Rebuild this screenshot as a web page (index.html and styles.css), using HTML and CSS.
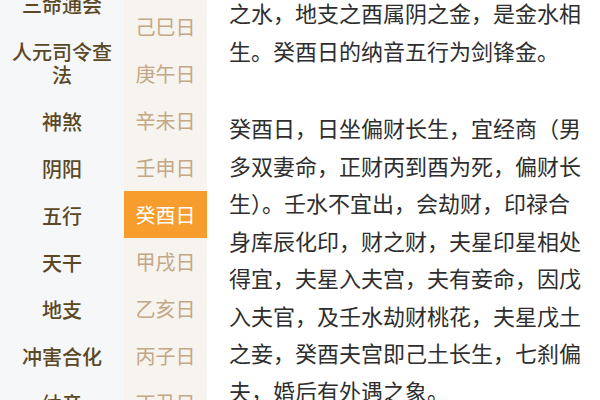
FILE: index.html
```html
<!DOCTYPE html>
<html lang="zh-CN">
<head>
<meta charset="utf-8">
<title>癸酉日</title>
<link rel="stylesheet" href="styles.css">
</head>
<body>
<div class="page">
  <nav class="cats">
    <ul class="cat-list">
      <li class="cat">三命通会</li>
      <li class="cat">人元司令查法</li>
      <li class="cat">神煞</li>
      <li class="cat">阴阳</li>
      <li class="cat">五行</li>
      <li class="cat">天干</li>
      <li class="cat">地支</li>
      <li class="cat">冲害合化</li>
      <li class="cat">纳音</li>
    </ul>
  </nav>
  <aside class="days">
    <ul class="day-list">
      <li class="day">戊辰日</li>
      <li class="day">己巳日</li>
      <li class="day">庚午日</li>
      <li class="day">辛未日</li>
      <li class="day">壬申日</li>
      <li class="day active">癸酉日</li>
      <li class="day">甲戌日</li>
      <li class="day">乙亥日</li>
      <li class="day">丙子日</li>
      <li class="day">丁丑日</li>
    </ul>
  </aside>
  <main class="content">
    <p class="para">之水，地支之酉属阴之金，是金水相生。癸酉日的纳音五行为剑锋金。</p>
    <p class="para">癸酉日，日坐偏财长生，宜经商（男多双妻命，正财丙到酉为死，偏财长生）。壬水不宜出，会劫财，印禄合身库辰化印，财之财，夫星印星相处得宜，夫星入夫宫，夫有妾命，因戊入夫官，及壬水劫财桃花，夫星戊土之妾，癸酉夫宫即己土长生，七刹偏夫，婚后有外遇之象。</p>
  </main>
</div>
</body>
</html>
```

FILE: styles.css
```css
html, body {
  margin: 0;
  padding: 0;
  background: #ffffff;
}

body {
  font-family: "Noto Sans CJK SC", "Noto Sans", sans-serif;
  width: 600px;
  height: 400px;
  overflow: hidden;
}

.page {
  display: flex;
  height: 400px;
  overflow: hidden;
}

ul {
  list-style: none;
  margin: 0;
  padding: 0;
}

.cats {
  width: 124px;
  flex: none;
  background: #f6f7f8;
  overflow: hidden;
}

.cat-list {
  margin-top: -19.5px;
}

.cat {
  padding: 12px 8px;
  font-size: 20px;
  font-weight: 500;
  line-height: 23px;
  color: #5a4826;
  text-align: center;
}

.days {
  width: 83px;
  flex: none;
  background: #f7f3ee;
  overflow: hidden;
}

.day-list {
  margin-top: -44.5px;
}

.day {
  height: 47px;
  display: flex;
  align-items: center;
  justify-content: center;
  font-size: 20px;
  color: #c3a887;
}

.day.active {
  background: #f79d2e;
  color: #ffffff;
}

.content {
  flex: 1;
  padding: 0 19px 0 22px;
  margin-top: -6px;
  color: #2e2e2e;
  font-size: 22px;
  line-height: 37.5px;
}

.para {
  margin: 0 0 40px 0;
}
```
